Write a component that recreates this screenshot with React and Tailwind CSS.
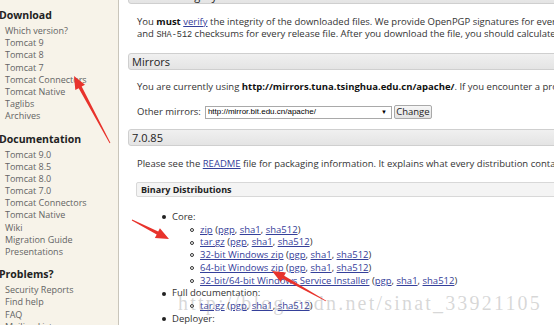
import React from 'react';

const sidebar = [
  {
    title: 'Download',
    links: ['Which version?', 'Tomcat 9', 'Tomcat 8', 'Tomcat 7', 'Tomcat Connectors', 'Tomcat Native', 'Taglibs', 'Archives'],
  },
  {
    title: 'Documentation',
    links: ['Tomcat 9.0', 'Tomcat 8.5', 'Tomcat 8.0', 'Tomcat 7.0', 'Tomcat Connectors', 'Tomcat Native', 'Wiki', 'Migration Guide', 'Presentations'],
  },
  {
    title: 'Problems?',
    links: ['Security Reports', 'Find help', 'FAQ', 'Mailing Lists'],
  },
];

const A = ({ children }) => <span className="text-[#35409a] underline underline-offset-1">{children}</span>;

const Sigs = () => (
  <>
    {' '}(<A>pgp</A>, <A>sha1</A>, <A>sha512</A>)
  </>
);

const Arrow = ({ x1, y1, x2, y2 }) => {
  // tapered shaft + triangular head pointing at (x2, y2)
  const dx = x2 - x1;
  const dy = y2 - y1;
  const len = Math.hypot(dx, dy);
  const ux = dx / len;
  const uy = dy / len;
  const nx = -uy;
  const ny = ux;
  const head = 13;
  const hw = 5.5;
  const bx = x2 - ux * head;
  const by = y2 - uy * head;
  const p = (x, y) => `${x.toFixed(1)},${y.toFixed(1)}`;
  const pts = [
    p(x1 + nx * 0.4, y1 + ny * 0.4),
    p(bx + nx * 1.7, by + ny * 1.7),
    p(bx + nx * hw, by + ny * hw),
    p(x2, y2),
    p(bx - nx * hw, by - ny * hw),
    p(bx - nx * 1.7, by - ny * 1.7),
    p(x1 - nx * 0.4, y1 - ny * 0.4),
  ].join(' ');
  return <polygon points={pts} fill="#e8332c" />;
};

const Header = ({ children, className = '' }) => (
  <div className={`h-[17px] border border-[#cfcfcf] rounded-[3px] bg-gradient-to-b from-[#f0f0f0] to-[#e4e4e4] pl-[3px] text-[11px] leading-[15px] text-[#222] ${className}`}>
    {children}
  </div>
);

const Item = ({ open, children }) => (
  <div className="flex items-center">
    <span className="w-[10px] shrink-0 flex items-center">
      {open ? (
        <span className="w-[4px] h-[4px] rounded-full border border-[#333]" />
      ) : (
        <span className="w-[4px] h-[4px] rounded-full bg-[#222]" />
      )}
    </span>
    <span>{children}</span>
  </div>
);

export default function App() {
  return (
    <div className="relative w-[554px] h-[325px] overflow-hidden flex bg-white font-['Open_Sans',sans-serif]">
      {/* Sidebar */}
      <div className="w-[119px] shrink-0 bg-[#f7f3e9] border-r border-[#c9c5bb] pt-[7px]">
        {sidebar.map((s) => (
          <div key={s.title} className="mb-[8px]">
            <div className="h-[16px] leading-[16px] text-[10.5px] font-bold text-[#222] ml-[-1px]">{s.title}</div>
            <div className="mt-[2px]">
              {s.links.map((l, i) => (
                <div key={i} className="h-[12.2px] leading-[12.2px] text-[9px] text-[#646464] pl-[5px] whitespace-nowrap">
                  {l}
                </div>
              ))}
            </div>
          </div>
        ))}
      </div>

      {/* Main */}
      <div className="w-[620px] shrink-0 pl-[9px] text-[9.5px] text-[#333]">
        <Header className="mt-[-13px]">Release Integrity</Header>
        <p className="mt-[12px] pl-[9px] leading-[12px] whitespace-nowrap">
          You <b className="text-[#111]">must</b> <A>verify</A> the integrity of the downloaded files. We provide OpenPGP signatures for every release file. This signature should be matched against the KEYS file.
          <br />
          and <span className="font-['Liberation_Mono',monospace] text-[8.5px]">SHA-512</span> checksums for every release file. After you download the file, you should calculate a checksum for your download.
        </p>

        <Header className="mt-[12px]">Mirrors</Header>
        <p className="mt-[11px] pl-[9px] leading-[12px] whitespace-nowrap">
          You are currently using <b className="text-[#111]">http://mirrors.tuna.tsinghua.edu.cn/apache/</b>. If you encounter a problem with this mirror, please select another mirror.
        </p>
        <div className="mt-[12px] pl-[9px] flex items-center h-[14px] whitespace-nowrap">
          <span>Other mirrors:</span>
          <div className="ml-[4px] w-[187px] h-[13px] border border-[#a9a9a9] bg-white flex items-center justify-between pl-[2px] pr-[4px] font-['Liberation_Sans',sans-serif] text-[8px] text-black">
            <span>http://mirror.bit.edu.cn/apache/</span>
            <span className="text-[6px]">▼</span>
          </div>
          <div className="ml-[2px] w-[38px] h-[14px] border border-[#a9a9a9] rounded-[2px] bg-gradient-to-b from-[#f6f6f6] to-[#e3e3e3] flex items-center justify-center text-[9.5px] text-[#222]">
            Change
          </div>
        </div>

        <Header className="mt-[10px] font-medium">7.0.85</Header>
        <p className="mt-[12px] pl-[9px] leading-[12px] whitespace-nowrap">
          Please see the <A>README</A> file for packaging information. It explains what every distribution contains.
        </p>

        <div className="mt-[12px] ml-[8px] h-[15px] border border-[#d8d8d8] rounded-[2px] bg-[#f4f4f4] pl-[4px] text-[9px] leading-[13px] font-bold text-[#222]">
          Binary Distributions
        </div>

        <div className="mt-[14px] pl-[34px] text-[9.5px] leading-[12.7px] whitespace-nowrap">
          <Item>Core:</Item>
          <div className="pl-[28px]">
            <Item open><A>zip</A><Sigs /></Item>
            <Item open><A>tar.gz</A><Sigs /></Item>
            <Item open><A>32-bit Windows zip</A><Sigs /></Item>
            <Item open><A>64-bit Windows zip</A><Sigs /></Item>
            <Item open><A>32-bit/64-bit Windows Service Installer</A><Sigs /></Item>
          </div>
          <Item>Full documentation:</Item>
          <div className="pl-[28px]">
            <Item open><A>tar.gz</A><Sigs /></Item>
          </div>
          <Item>Deployer:</Item>
        </div>
      </div>

      {/* Watermark */}
      <div className="absolute left-[178px] top-[290px] font-['Liberation_Serif',serif] text-[20px] leading-[26px] tracking-[2.2px] text-[rgba(140,140,140,0.35)] whitespace-nowrap pointer-events-none">
        http://blog.csdn.net/sinat_33921105
      </div>

      {/* Annotation arrows */}
      <svg className="absolute inset-0 pointer-events-none" width="554" height="325" viewBox="0 0 554 325">
        <Arrow x1={110} y1={143} x2={74} y2={76} />
        <Arrow x1={132} y1={220} x2={169} y2={239} />
        <Arrow x1={326} y1={301} x2={272} y2={271} />
      </svg>
    </div>
  );
}
